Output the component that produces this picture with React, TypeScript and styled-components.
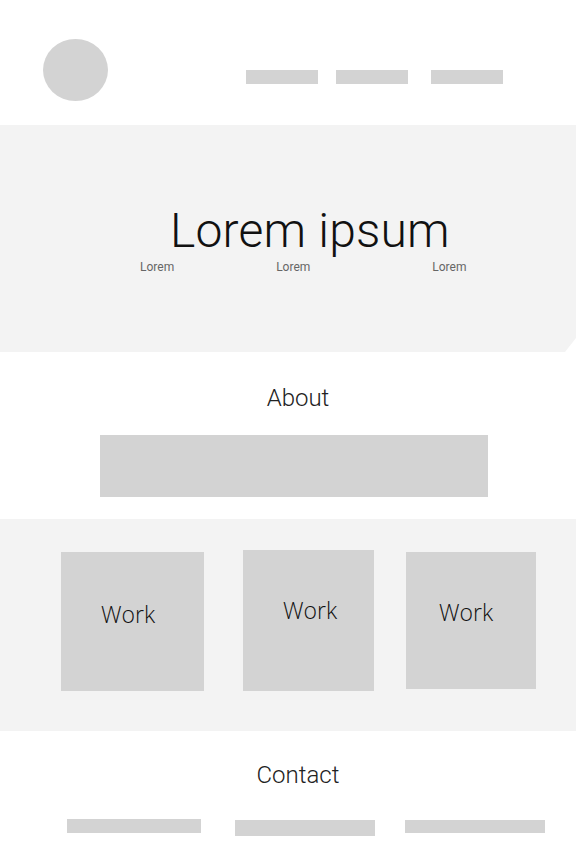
import React from "react";
import styled, { createGlobalStyle } from "styled-components";

const Global = createGlobalStyle`
  html, body { margin: 0; padding: 0; background: #ffffff; }
  body { font-family: Roboto, "Liberation Sans", sans-serif; color: #111; }
`;

const Page = styled.div`
  width: 576px;
  height: 864px;
  overflow: hidden;
  display: flex;
  flex-direction: column;
`;

const Header = styled.header`
  height: 125px;
  box-sizing: border-box;
  display: flex;
  align-items: flex-start;
  padding: 39px 0 0 43px;
`;

const Logo = styled.div`
  width: 65px;
  height: 62px;
  border-radius: 50%;
  background: #d3d3d3;
`;

const Nav = styled.nav`
  display: flex;
  margin: 31px 0 0 138px;
`;

const NavItem = styled.div<{ $gap: number }>`
  width: 72px;
  height: 14px;
  background: #d3d3d3;
  margin-left: ${(p) => p.$gap}px;
`;

const Hero = styled.section`
  position: relative;
  height: 227px;
  background: #f3f3f3;
  box-sizing: border-box;
  padding-top: 82px;
  &::after {
    content: "";
    position: absolute;
    right: 0;
    bottom: 0;
    width: 0;
    height: 0;
    border-left: 11px solid transparent;
    border-bottom: 14px solid #ffffff;
  }
`;

const Title = styled.h1`
  margin: 0 0 0 170px;
  font-weight: 300;
  font-size: 48px;
  line-height: 48px;
  letter-spacing: 0.2px;
  color: #111;
`;

const SubRow = styled.div`
  display: flex;
  margin-top: 5px;
`;

const Sub = styled.span<{ $left: number }>`
  margin-left: ${(p) => p.$left}px;
  font-size: 12px;
  line-height: 14px;
  color: #666;
  font-weight: 400;
`;

const About = styled.section`
  height: 167px;
  box-sizing: border-box;
  padding-top: 32px;
  display: flex;
  flex-direction: column;
`;

const Heading = styled.h2`
  margin: 0;
  text-align: center;
  padding-left: 20px;
  font-weight: 300;
  font-size: 24px;
  line-height: 28px;
  color: #222;
`;

const AboutBox = styled.div`
  width: 388px;
  height: 62px;
  margin: 23px 0 0 100px;
  background: #d3d3d3;
`;

const Works = styled.section`
  height: 212px;
  background: #f3f3f3;
  display: flex;
  align-items: flex-start;
`;

const Card = styled.div<{ $left: number; $top: number; $w: number; $h: number; $ty: number; $tx: number }>`
  margin-left: ${(p) => p.$left}px;
  margin-top: ${(p) => p.$top}px;
  width: ${(p) => p.$w}px;
  height: ${(p) => p.$h}px;
  background: #d3d3d3;
  box-sizing: border-box;
  padding: ${(p) => p.$ty}px 0 0 ${(p) => p.$tx}px;
  font-family: "Open Sans", "Liberation Sans", sans-serif;
  font-weight: 300;
  font-size: 23px;
  line-height: 28px;
  color: #111;
`;

const Contact = styled.section`
  flex: 1;
  box-sizing: border-box;
  padding-top: 30px;
  display: flex;
  flex-direction: column;
`;

const LinkRow = styled.div`
  display: flex;
  align-items: flex-start;
  margin-top: 30px;
`;

const LinkBar = styled.div<{ $left: number; $w: number; $h: number; $top: number }>`
  margin-left: ${(p) => p.$left}px;
  margin-top: ${(p) => p.$top}px;
  width: ${(p) => p.$w}px;
  height: ${(p) => p.$h}px;
  background: #d3d3d3;
`;

export default function App() {
  return (
    <Page>
      <Global />
      <Header>
        <Logo />
        <Nav>
          <NavItem $gap={0} />
          <NavItem $gap={18} />
          <NavItem $gap={23} />
        </Nav>
      </Header>
      <Hero>
        <Title>Lorem ipsum</Title>
        <SubRow>
          <Sub $left={140}>Lorem</Sub>
          <Sub $left={102}>Lorem</Sub>
          <Sub $left={122}>Lorem</Sub>
        </SubRow>
      </Hero>
      <About>
        <Heading>About</Heading>
        <AboutBox />
      </About>
      <Works>
        <Card $left={61} $top={33} $w={143} $h={139} $ty={48} $tx={40}>Work</Card>
        <Card $left={39} $top={31} $w={131} $h={141} $ty={46} $tx={40}>Work</Card>
        <Card $left={32} $top={33} $w={130} $h={137} $ty={46} $tx={33}>Work</Card>
      </Works>
      <Contact>
        <Heading>Contact</Heading>
        <LinkRow>
          <LinkBar $left={67} $w={134} $h={14} $top={0} />
          <LinkBar $left={34} $w={140} $h={16} $top={1} />
          <LinkBar $left={30} $w={140} $h={13} $top={1} />
        </LinkRow>
      </Contact>
    </Page>
  );
}
